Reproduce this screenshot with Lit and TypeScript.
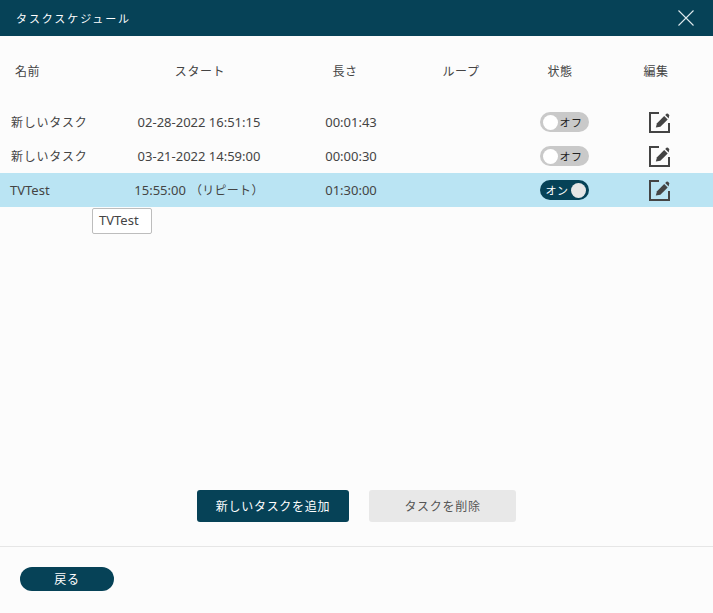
import { LitElement, html, css, svg } from "lit";
import { customElement } from "lit/decorators.js";

const editIcon = svg`<svg class="edit" viewBox="0 0 22 21" width="22" height="21" aria-hidden="true">
  <path d="M11 1H2V20H21V11" fill="none" stroke="#444" stroke-width="2"/>
  <path d="M7.8 15.6L9 11.2L16.2 4L19.7 7.5L12.4 14.7Z" fill="#444"/>
  <path d="M17.2 3L18.4 1.8Q19.2 1 20 1.8L21 2.8Q21.8 3.6 21 4.4L20.7 6.5Z" fill="#444"/>
</svg>`;

const rows = [
  { name: "新しいタスク", start: "02-28-2022 16:51:15", rep: "", len: "00:01:43", on: false, sel: false },
  { name: "新しいタスク", start: "03-21-2022 14:59:00", rep: "", len: "00:00:30", on: false, sel: false },
  { name: "TVTest", start: "15:55:00", rep: "（リピート）", len: "01:30:00", on: true, sel: true },
];

@customElement("app-root")
export class AppRoot extends LitElement {
  static styles = css`
    :host {
      display: flex;
      flex-direction: column;
      width: 713px;
      height: 613px;
      background: #fcfcfc;
      color: #444;
      font-family: "Noto Sans", "Noto Sans CJK JP", sans-serif;
      font-size: 12px;
      position: relative;
      overflow: hidden;
    }
    .title {
      height: 36px;
      flex: none;
      background: #064257;
      color: #fff;
      display: flex;
      align-items: center;
      justify-content: space-between;
      padding: 0 19px 0 16px;
      font-size: 11px;
      letter-spacing: 1.9px;
    }
    .close { display: block; }
    .grid {
      display: grid;
      align-items: center;
      height: 34px;
    }
    .grid > div { text-align: center; white-space: nowrap; }
    .grid > .name { text-align: left; padding-left: 11px; }
    .head {
      grid-template-columns: 110px 180px 110px 122px 76px 116px;
      margin-top: 18px;
      letter-spacing: 0.6px;
    }
    .head > .name { padding-left: 15px; }
    .row { grid-template-columns: 110px 178px 126px 94px 112px 78px 15px; font-size: 13px; }
    .body { margin-top: 17px; position: relative; flex: 1; }
    .jp { font-size: 12px; letter-spacing: 0.75px; }
    .rep { margin-left: 4px; letter-spacing: 0.3px; }
    .shift { margin-left: -10px; }
    .sel { background: #bae4f3; }
    .sel > .name { padding-left: 10px; }
    .cell { display: flex; justify-content: center; align-items: center; }
    .toggle {
      width: 49px;
      height: 20px;
      box-sizing: border-box;
      border-radius: 10px;
      background: #c9c9c9;
      color: #222;
      display: flex;
      align-items: center;
      padding: 0 3px;
      gap: 2px;
      font-size: 11px;
      letter-spacing: 0.6px;
    }
    .toggle.on { background: #064257; color: #fff; justify-content: space-between; padding: 0 3px 0 6px; }
    .knob { width: 15px; height: 15px; border-radius: 50%; background: #fff; flex: none; }
    .on .knob { background: #e6e6e6; }
    .edit { display: block; }
    .tip {
      position: absolute;
      left: 92px;
      top: 103px;
      width: 60px;
      height: 26px;
      box-sizing: border-box;
      background: #fff;
      border: 1px solid #bdbdbd;
      border-radius: 2px;
      padding: 3px 6px;
      line-height: 16px;
      font-size: 13px;
    }
    .actions {
      flex: none;
      display: flex;
      justify-content: flex-start;
      gap: 20px;
      padding-left: 197px;
    }
    .btn {
      height: 32px;
      border-radius: 3px;
      display: flex;
      align-items: center;
      justify-content: center;
      letter-spacing: 0.7px;
    }
    .add { width: 152px; background: #064257; color: #fff; }
    .del { width: 147px; background: #e8e8e8; color: #555; }
    .foot {
      flex: none;
      margin-top: 24px;
      border-top: 1px solid #e6e6e6;
      height: 67px;
      box-sizing: border-box;
      padding: 20px 0 0 20px;
    }
    .back {
      width: 94px;
      height: 24px;
      border-radius: 12px;
      background: #064257;
      color: #fff;
      display: flex;
      align-items: center;
      justify-content: center;
      letter-spacing: 0.7px;
    }
  `;

  render() {
    return html`
      <div class="title">
        <span>タスクスケジュール</span>
        <svg class="close" width="16" height="16" viewBox="0 0 16 16" aria-hidden="true">
          <path d="M.5.5L15.5 15.5M15.5.5L.5 15.5" stroke="#dfe9ec" stroke-width="1.1" fill="none"/>
        </svg>
      </div>
      <div class="grid head">
        <div class="name">名前</div><div>スタート</div><div>長さ</div><div>ループ</div><div>状態</div><div>編集</div>
      </div>
      <div class="body">
        ${rows.map(
          (r) => html`
            <div class="grid row ${r.sel ? "sel" : ""}">
              <div class="name ${r.sel ? "" : "jp"}">${r.name}</div>
              <div>${r.start}${r.rep ? html`<span class="jp rep">${r.rep}</span>` : ""}</div>
              <div>${r.len}</div>
              <div></div>
              <div class="cell">
                ${r.on
                  ? html`<div class="toggle on"><span>オン</span><span class="knob"></span></div>`
                  : html`<div class="toggle"><span class="knob"></span><span>オフ</span></div>`}
              </div>
              <div class="cell">${editIcon}</div>
              <div></div>
            </div>
          `
        )}
        <div class="tip">TVTest</div>
      </div>
      <div class="actions">
        <div class="btn add">新しいタスクを追加</div>
        <div class="btn del">タスクを削除</div>
      </div>
      <div class="foot"><div class="back">戻る</div></div>
    `;
  }
}
